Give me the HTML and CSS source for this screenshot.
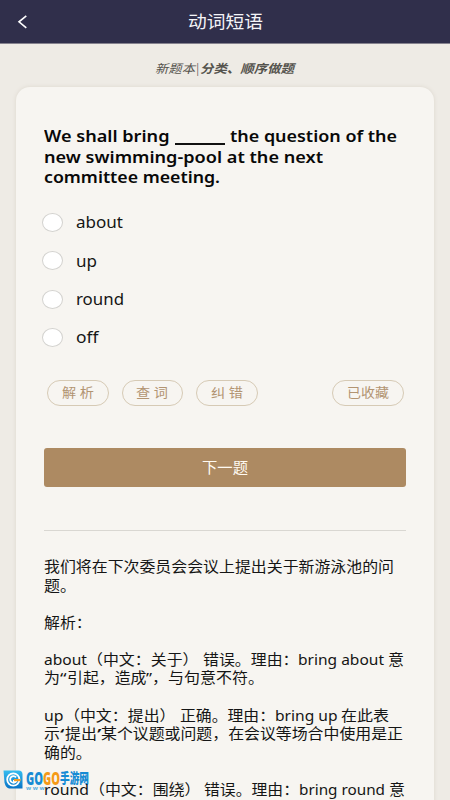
FILE: index.html
```html
<!DOCTYPE html>
<html lang="zh-CN">
<head>
<meta charset="utf-8">
<title>动词短语</title>
<link rel="stylesheet" href="styles.css">
</head>
<body>
<header class="bar">
  <svg class="back" viewBox="0 0 12 16"><path d="M9.3 1.8 2 7.8 9.3 13.8"/></svg>
  <h1 class="title"><span data-w="75">动词短语</span></h1>
</header>
<div class="crumb"><span data-w="40">新题本</span><span data-w="5">|</span><b data-w="94">分类、顺序做题</b></div>
<main class="card">
  <div class="question">
    <div class="line"><span data-w="125.5">We shall bring</span><i class="blank"></i><span data-w="167" data-gap="4.5">the question of the</span></div>
    <div class="line"><span data-w="279">new swimming-pool at the next</span></div>
    <div class="line"><span data-w="176">committee meeting.</span></div>
  </div>
  <div class="options">
    <label class="option"><i class="radio"></i><span data-w="47">about</span></label>
    <label class="option"><i class="radio"></i><span data-w="21">up</span></label>
    <label class="option"><i class="radio"></i><span data-w="48">round</span></label>
    <label class="option"><i class="radio"></i><span data-w="22.5">off</span></label>
  </div>
  <div class="tools">
    <button class="pill"><span data-w="32">解 析</span></button>
    <button class="pill"><span data-w="32">查 词</span></button>
    <button class="pill"><span data-w="32">纠 错</span></button>
    <button class="pill saved"><span data-w="42">已收藏</span></button>
  </div>
  <button class="next"><span data-w="46">下一题</span></button>
  <div class="answer">
    <div class="para">
      <div class="line"><span data-w="350">我们将在下次委员会会议上提出关于新游泳池的问</span></div>
      <div class="line"><span data-w="32">题。</span></div>
    </div>
    <div class="para">
      <div class="line"><span data-w="47.7">解析：</span></div>
    </div>
    <div class="para">
      <div class="line"><span data-w="43">about</span><span data-w="111.5">（中文：关于）</span><span data-w="95.5" data-gap="4">错误。理由：</span><span data-w="86">bring about</span><span data-w="16" data-gap="3.5">意</span></div>
      <div class="line"><span data-w="16">为</span><span data-w="6.5">“</span><span data-w="79.5">引起，造成</span><span data-w="6">”</span><span data-w="112">，与句意不符。</span></div>
    </div>
    <div class="para">
      <div class="line"><span data-w="19.5">up</span><span data-w="111.5">（中文：提出）</span><span data-w="95" data-gap="4.5">正确。理由：</span><span data-w="62.5">bring up</span><span data-w="48" data-gap="4">在此表</span></div>
      <div class="line"><span data-w="16">示</span><span data-w="4.5">‘</span><span data-w="32">提出</span><span data-w="4.5">’</span><span data-w="302">某个议题或问题，在会议等场合中使用是正</span></div>
      <div class="line"><span data-w="47.7">确的。</span></div>
    </div>
    <div class="para over">
      <div class="line"><span data-w="45">round</span><span data-w="111.5">（中文：围绕）</span><span data-w="95" data-gap="3.5">错误。理由：</span><span data-w="86">bring round</span><span data-w="16" data-gap="3.5">意</span></div>
    </div>
  </div>
</main>
<div class="mark">
  <svg class="mark-icon" viewBox="0 0 20 20">
    <defs><linearGradient id="sky" x1="0" y1="0" x2="0" y2="1"><stop offset="0" stop-color="#35bdf0"/><stop offset="1" stop-color="#0873c6"/></linearGradient></defs>
    <path d="M.5 1H15.500Q19.500 1 19.500 5V19H6Q2.500 18 1.500 13Z" fill="url(#sky)"/>
    <circle cx="10.300" cy="10" r="6.100" fill="none" stroke="#fff" stroke-width="1.800"/>
    <path d="M13 7.800A3.300 3.300 0 1 0 13.400 11.500H10" fill="none" stroke="#fff" stroke-width="1.800"/>
    <path d="M11 9.500H17.500V11.700H11Z" fill="#f79b20"/>
  </svg>
  <div class="mark-text">
    <div class="mark-name"><span class="blue" data-w="17">GO</span><span class="orange" data-w="17">GO</span><span class="cn" data-w="29">手游网</span></div>
    <div class="mark-sub">w w w</div>
  </div>
</div>
<script>
// Stretches each text run horizontally to its given width.
document.querySelectorAll('[data-w]').forEach(function (el) {
  var inner = document.createElement('span');
  inner.className = 'run';
  while (el.firstChild) inner.appendChild(el.firstChild);
  el.appendChild(inner);
  var w = parseFloat(el.dataset.w);
  var natural = inner.getBoundingClientRect().width;
  el.classList.add('fit');
  el.style.width = w + 'px';
  if (el.dataset.gap) el.style.marginLeft = el.dataset.gap + 'px';
  inner.style.transform = 'scaleX(' + w / natural + ')';
});
</script>
</body>
</html>
```

FILE: styles.css
```css
* { box-sizing: border-box; }
html, body { margin: 0; height: 800px; overflow: hidden; }
body {
  position: relative;
  background: #eeebe5;
  color: #151515;
  font-family: "Noto Sans", "Noto Sans CJK SC", sans-serif;
}
button { font-family: inherit; padding: 0; margin: 0; }
.run { display: inline-block; white-space: pre; transform-origin: 0 50%; }
.fit { display: block; flex: none; text-align: left; }
.bar {
  height: 44px;
  background: #302f4b;
  border-bottom: 1px solid #85828e;
  display: flex;
  align-items: center;
  padding-left: 17px;
}
.back { width: 12px; height: 16px; flex: none; fill: none; stroke: #fff; stroke-width: 1.6; }
.title {
  margin: 0 0 0 159px;
  font-size: 17.500px;
  line-height: 24px;
  font-weight: 400;
  color: #f4f4f8;
}
.title .run { position: relative; top: -1px; }
.crumb {
  height: 43px;
  display: flex;
  justify-content: center;
  padding: 14px 1px 0 0;
  font-size: 12px;
  line-height: 22px;
  font-style: italic;
  color: #55534d;
}
.card {
  margin: 0 16px;
  height: 740px;
  padding: 39px 28px 0;
  background: #f7f5f1;
  border-radius: 14px;
  box-shadow: 0 0 4px #dcd7cd;
}
.line { display: flex; }
.question {
  font-size: 16.500px;
  line-height: 20.700px;
  font-weight: 600;
  color: #080808;
}
.question .line { height: 20.700px; }
.blank { width: 50px; height: 1.700px; margin: 17px 0 0 5.500px; background: #111; }
.options { margin: 15px 0 0 -2px; }
.option { display: flex; align-items: center; height: 38.400px; font-size: 16px; line-height: 22px; }
.radio {
  width: 21px;
  height: 19px;
  margin-right: 13px;
  border: 1px solid #d3d2cf;
  border-radius: 50%;
  background: #fff;
}
.tools { display: flex; gap: 13px; margin: 23px 2px 0 3px; }
.pill {
  width: 61.500px;
  height: 26px;
  border: 1px solid #d6cab5;
  border-radius: 13px;
  background: transparent;
  color: #b29472;
  font-size: 13px;
  line-height: 22px;
  display: flex;
  justify-content: center;
  align-items: center;
}
.pill .run { position: relative; top: -1px; }
.saved { width: 72px; margin-left: auto; }
.next {
  display: flex;
  justify-content: center;
  align-items: center;
  width: 362px;
  height: 39px;
  margin-top: 42px;
  border: 0;
  border-radius: 3px;
  background: #ad8a62;
  color: #fffaf2;
  font-size: 14.500px;
}
.next .run { position: relative; top: -1px; }
.answer {
  margin-top: 43px;
  border-top: 1px solid #d9d7d2;
  padding-top: 26.500px;
  font-size: 14.700px;
  line-height: 18.550px;
}
.answer .line { height: 18.550px; }
.para { margin-bottom: 18.550px; }
.over { position: relative; z-index: 2; }
.mark { position: absolute; z-index: 1; left: 3px; top: 769px; display: flex; gap: 3px; }
.mark-icon { width: 20px; height: 21px; }
.mark-name { display: flex; height: 17px; font-size: 18px; line-height: 18px; font-weight: 900; }
.blue { color: #168bd4; }
.orange { color: #f59a16; }
.cn { color: #168bd4; font-size: 14px; line-height: 17px; }
.mark-sub { font-size: 6px; line-height: 5px; font-weight: 700; color: #58afe0; }
```
